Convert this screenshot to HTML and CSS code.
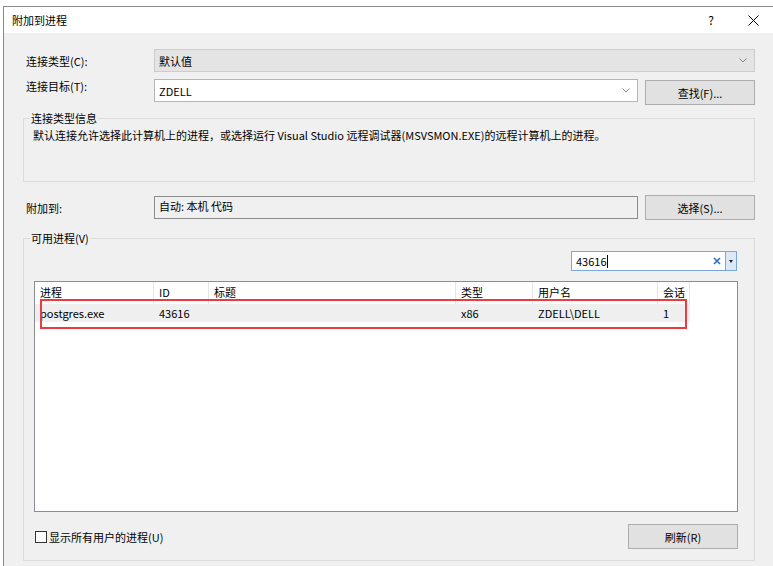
FILE: index.html
```html
<!DOCTYPE html>
<html lang="zh-CN">

<head>
    <meta charset="UTF-8">
    <meta name="viewport" content="width=device-width, initial-scale=1.0">
    <title>附加到进程</title>
    <link rel="stylesheet" href="styles.css">
</head>

<body>
    <div class="dialog">
        <div class="titlebar">
            <span class="title">附加到进程</span>
            <span class="help">?</span>
            <span class="close">
                <svg width="11" height="11" viewBox="0 0 11 11"><path d="M0.5 0.5 L10.5 10.5 M10.5 0.5 L0.5 10.5" stroke="#000" stroke-width="1" fill="none"/></svg>
            </span>
        </div>

        <div class="content">
            <div class="row">
                <span class="label">连接类型(C):</span>
                <div class="combo combo-disabled">
                    <span>默认值</span>
                    <svg class="chevron" width="8" height="5" viewBox="0 0 8 5"><polyline points="0.5,0.5 4,4 7.5,0.5" stroke="#888" fill="none"/></svg>
                </div>
            </div>

            <div class="row row-target">
                <span class="label">连接目标(T):</span>
                <div class="combo combo-target">
                    <span>ZDELL</span>
                    <svg class="chevron" width="8" height="5" viewBox="0 0 8 5"><polyline points="0.5,0.5 4,4 7.5,0.5" stroke="#888" fill="none"/></svg>
                </div>
                <button class="button">查找(F)...</button>
            </div>

            <div class="group group-info">
                <span class="group-title">连接类型信息</span>
                <p class="info-text">默认连接允许选择此计算机上的进程，或选择运行 Visual Studio 远程调试器(MSVSMON.EXE)的远程计算机上的进程。</p>
            </div>

            <div class="row row-attach">
                <span class="label">附加到:</span>
                <div class="field">自动: 本机 代码</div>
                <button class="button">选择(S)...</button>
            </div>

            <div class="group group-procs">
                <span class="group-title">可用进程(V)</span>

                <div class="filter-bar">
                    <div class="search">
                        <span class="search-text">43616</span><span class="caret"></span>
                        <svg class="clear" width="8" height="8" viewBox="0 0 8 8"><path d="M1 1 L7 7 M7 1 L1 7" stroke="#2a6fc4" stroke-width="1.6" fill="none"/></svg>
                        <span class="search-drop"><span class="tri"></span></span>
                    </div>
                </div>

                <div class="list">
                    <div class="list-grid">
                        <div class="th">进程</div>
                        <div class="th">ID</div>
                        <div class="th">标题</div>
                        <div class="th">类型</div>
                        <div class="th">用户名</div>
                        <div class="th">会话</div>

                        <div class="td sel">postgres.exe</div>
                        <div class="td sel">43616</div>
                        <div class="td sel"></div>
                        <div class="td sel">x86</div>
                        <div class="td sel">ZDELL\DELL</div>
                        <div class="td sel">1</div>
                    </div>
                    <div class="mark"></div>
                </div>

                <div class="list-footer">
                    <label class="check"><span class="box"></span>显示所有用户的进程(U)</label>
                    <button class="button">刷新(R)</button>
                </div>
            </div>
        </div>
    </div>
</body>

</html>
```

FILE: styles.css
```css
html,
body {
    margin: 0;
    height: 100%;
}

body {
    font-family: "Noto Sans CJK SC", "Noto Sans", sans-serif;
    font-size: 11px;
    line-height: 14px;
    color: #000;
    background-color: #fff;
    overflow: hidden;
}

.dialog {
    display: flex;
    flex-direction: column;
    height: calc(100% - 7px);
    margin: 6px 0 0 3px;
    border-left: 1px solid #8a8a8a;
    border-top: 1px solid #8a8a8a;
}

.titlebar {
    display: flex;
    align-items: center;
    height: 26px;
    padding: 0 4px 0 8px;
    background-color: #fff;
}

.help {
    margin-left: auto;
    width: 20px;
    text-align: center;
    font-size: 12px;
}

.close {
    display: flex;
    justify-content: center;
    width: 32px;
    margin-left: 16px;
}

.content {
    flex: 1;
    background-color: #f0f0f0;
    padding: 16px 18px 0 19px;
}

.row {
    display: flex;
    align-items: center;
    height: 23px;
    padding-left: 3px;
}

.label {
    width: 128px;
    flex-shrink: 0;
}

.combo {
    flex: 1;
    display: flex;
    align-items: center;
    justify-content: space-between;
    height: 23px;
    box-sizing: border-box;
    padding: 0 7px 0 4px;
}

.combo-disabled {
    background-color: #e4e4e4;
    border: 1px solid #cccccc;
}

.combo-target {
    background-color: #fff;
    border: 1px solid #b5b5b5;
    margin-right: 7px;
}

.row-target {
    margin-top: 7px;
    height: 26px;
    align-items: flex-start;
}

.row-target .button {
    margin-top: 1px;
}

.button {
    width: 110px;
    height: 25px;
    flex-shrink: 0;
    box-sizing: border-box;
    background-color: #e1e1e1;
    border: 1px solid #adadad;
    font-family: inherit;
    font-size: 11px;
    color: #000;
    padding: 0;
}

.group {
    position: relative;
    border: 1px solid #dcdcdc;
    box-sizing: border-box;
}

.group-title {
    position: absolute;
    top: -8px;
    left: 6px;
    padding: 0 1px;
    background-color: #f0f0f0;
}

.group-info {
    margin-top: 13px;
    height: 64px;
    padding: 9px 9px 0 9px;
}

.info-text {
    margin: 0;
}

.row-attach {
    margin-top: 13px;
    height: 25px;
}

.field {
    flex: 1;
    height: 23px;
    box-sizing: border-box;
    border: 1px solid #8c8c8c;
    padding: 2px 4px 0;
    margin-right: 7px;
}

.group-procs {
    margin-top: 18px;
    height: 323px;
    padding: 12px 16px 0 10px;
}

.filter-bar {
    display: flex;
    justify-content: flex-end;
    padding-right: 1px;
}

.search {
    display: flex;
    align-items: center;
    width: 166px;
    height: 20px;
    box-sizing: border-box;
    border: 1px solid #7aa7d9;
    background-color: #fff;
    padding-left: 4px;
}

.caret {
    width: 1px;
    height: 13px;
    background-color: #000;
}

.clear {
    margin-left: auto;
    margin-right: 4px;
}

.search-drop {
    display: flex;
    align-items: center;
    justify-content: center;
    width: 10px;
    height: 100%;
    border-left: 1px solid #7aa7d9;
    background-color: #dbe9f7;
}

.tri {
    width: 0;
    height: 0;
    border-left: 2px solid transparent;
    border-right: 2px solid transparent;
    border-top: 3px solid #222;
}

.list {
    position: relative;
    margin-top: 10px;
    height: 231px;
    box-sizing: border-box;
    border: 1px solid #8a8d94;
    background-color: #fff;
}

.list-grid {
    display: grid;
    grid-template-columns: 119px 55px 247px 77px 125px 32px;
    grid-template-rows: 22px 18px;
}

.th {
    border-right: 1px solid #e5e5e5;
    padding: 3px 0 0 5px;
}

.td {
    padding: 2px 0 0 5px;
}

.sel {
    background-color: #efefef;
}

.mark {
    position: absolute;
    left: 5px;
    top: 17px;
    width: 647px;
    height: 30px;
    box-sizing: border-box;
    border: 2px solid #ec3b3f;
}

.list-footer {
    display: flex;
    align-items: center;
    justify-content: space-between;
    margin-top: 12px;
}

.check {
    display: flex;
    align-items: center;
    padding-left: 1px;
}

.box {
    width: 12px;
    height: 12px;
    box-sizing: border-box;
    border: 1px solid #333;
    background-color: #fff;
    margin-right: 2px;
}
```
